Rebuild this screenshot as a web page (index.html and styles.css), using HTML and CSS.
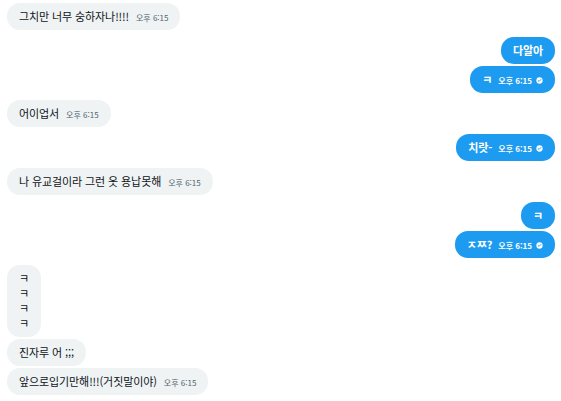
FILE: index.html
```html
<!DOCTYPE html>
<html lang="ko">
<head>
<meta charset="utf-8">
<link rel="stylesheet" href="styles.css">
</head>
<body>
<div class="chat">
  <div class="group">
    <div class="row in"><div class="bubble"><span class="text">그치만 너무 숭하자나!!!!</span><span class="time">오후 6:15</span></div></div>
  </div>
  <div class="group">
    <div class="row out"><div class="bubble"><span class="text">다알아</span></div></div>
    <div class="row out"><div class="bubble"><span class="text">ㅋ</span><span class="time">오후 6:15</span><svg class="check" viewBox="0 0 8 8"><circle cx="4" cy="4" r="3.6" fill="#fff"/><path d="M2.4 4.1 L3.5 5.1 L5.6 2.9" fill="none" stroke="#1d9bf0" stroke-width="1.1" stroke-linecap="round" stroke-linejoin="round"/></svg></div></div>
  </div>
  <div class="group">
    <div class="row in"><div class="bubble"><span class="text">어이업서</span><span class="time">오후 6:15</span></div></div>
  </div>
  <div class="group">
    <div class="row out"><div class="bubble"><span class="text">치랏-</span><span class="time">오후 6:15</span><svg class="check" viewBox="0 0 8 8"><circle cx="4" cy="4" r="3.6" fill="#fff"/><path d="M2.4 4.1 L3.5 5.1 L5.6 2.9" fill="none" stroke="#1d9bf0" stroke-width="1.1" stroke-linecap="round" stroke-linejoin="round"/></svg></div></div>
  </div>
  <div class="group">
    <div class="row in"><div class="bubble"><span class="text">나 유교걸이라 그런 옷 용납못해</span><span class="time">오후 6:15</span></div></div>
  </div>
  <div class="group">
    <div class="row out"><div class="bubble"><span class="text">ㅋ</span></div></div>
    <div class="row out"><div class="bubble"><span class="text">ㅈㅉ?</span><span class="time">오후 6:15</span><svg class="check" viewBox="0 0 8 8"><circle cx="4" cy="4" r="3.6" fill="#fff"/><path d="M2.4 4.1 L3.5 5.1 L5.6 2.9" fill="none" stroke="#1d9bf0" stroke-width="1.1" stroke-linecap="round" stroke-linejoin="round"/></svg></div></div>
  </div>
  <div class="group">
    <div class="row in"><div class="bubble"><span class="text">ㅋ<br>ㅋ<br>ㅋ<br>ㅋ</span></div></div>
    <div class="row in"><div class="bubble"><span class="text">진자루 어 ;;;</span></div></div>
    <div class="row in"><div class="bubble"><span class="text">앞으로입기만해!!!(거짓말이야)</span><span class="time">오후 6:15</span></div></div>
  </div>
</div>
</body>
</html>
```

FILE: styles.css
```css
html, body {
  margin: 0;
  padding: 0;
  background: #ffffff;
}

body {
  font-family: "Noto Sans CJK KR", "Noto Sans", sans-serif;
  color: #0f1419;
}

.chat {
  display: flex;
  flex-direction: column;
  gap: 7px;
  padding: 3px 6px 0 7px;
}

.group {
  display: flex;
  flex-direction: column;
  gap: 2px;
}

.row {
  display: flex;
}

.row.in {
  justify-content: flex-start;
}

.row.out {
  justify-content: flex-end;
}

.bubble {
  display: flex;
  align-items: baseline;
  padding: 6px 12px;
  border-radius: 13px;
  background: #eff3f4;
  font-size: 11px;
  line-height: 15px;
}

.text {
  line-height: 15px;
  letter-spacing: -0.1px;
}

.out .bubble {
  background: #1d9bf0;
  color: #ffffff;
  font-weight: 700;
}

.time {
  margin-left: 7px;
  font-size: 8px;
  line-height: 8px;
  font-weight: 400;
  color: #536471;
}

.out .time {
  margin-left: 6px;
  color: #ffffff;
  font-weight: 700;
}

.check {
  width: 7px;
  height: 7px;
  margin-left: 4px;
  align-self: center;
  position: relative;
  top: 1px;
}
```
